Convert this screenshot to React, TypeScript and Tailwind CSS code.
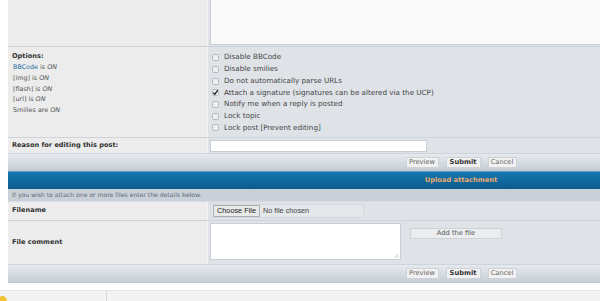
import React from "react";

const font = { fontFamily: '"DejaVu Sans", Verdana, sans-serif' };

function Box({ checked }: { checked?: boolean }) {
  return (
    <span className="relative inline-block w-[7px] h-[7px] border border-[#b3b9bf] bg-[#eceef0] rounded-[1.5px] mr-[5px] shrink-0">
      {checked && (
        <svg viewBox="0 0 8 8" className="absolute left-[-1px] top-[-1px] w-[7px] h-[7px]">
          <path d="M1.5 4.2 L3.2 6 L6.6 1.4" stroke="#222" strokeWidth="1.5" fill="none" />
        </svg>
      )}
    </span>
  );
}

function Btn({ children, bold, w }: { children: React.ReactNode; bold?: boolean; w: string }) {
  return (
    <span
      className={`inline-flex items-center justify-center h-[11px] border border-[#cfd3d7] bg-[#f1f1f1] text-[6.7px] leading-none ${w} ${
        bold ? "font-bold text-[#333]" : "text-[#666]"
      }`}
    >
      {children}
    </span>
  );
}

function Bar({ h }: { h: string }) {
  return (
    <div className={`${h} flex items-center bg-gradient-to-b from-[#e6eaee] to-[#c6ced6] border-b border-[#bfc7cf]`}>
      <div className="w-[908px] flex justify-center gap-[7px]">
        <Btn w="w-[33px]">Preview</Btn>
        <Btn w="w-[35px]" bold>
          Submit
        </Btn>
        <Btn w="w-[29px]">Cancel</Btn>
      </div>
    </div>
  );
}

export default function App() {
  const opts = [
    "Disable BBCode",
    "Disable smilies",
    "Do not automatically parse URLs",
    "Attach a signature (signatures can be altered via the UCP)",
    "Notify me when a reply is posted",
    "Lock topic",
    "Lock post [Prevent editing]",
  ];
  return (
    <div className="w-[600px] h-[301px] overflow-hidden bg-white relative" style={font}>
      <div className="ml-[8px] w-[906px]">
        {/* message row */}
        <div className="flex h-[47px] border-b border-[#cdd4db]">
          <div className="w-[199px] bg-[#ececec]" />
          <div className="flex-1 bg-[#dfe3e8] border-l border-[#f3f4f5] pl-[2px]">
            <div className="h-[45px] bg-[#f9f9f9] border border-[#c8ced4] border-t-0" />
          </div>
        </div>
        {/* options row */}
        <div className="flex h-[91px] border-b border-[#cdd4db]">
          <div className="w-[199px] bg-[#ececec] pl-[4px] pt-[5px]">
            <div className="text-[6.6px] font-bold text-[#333] leading-[9px]">Options:</div>
            <div className="text-[6.4px] text-[#555] leading-[10.8px] pl-[1px] mt-[1px]">
              <div>
                <span className="text-[#1b6aa0]">BBCode</span> is <i>ON</i>
              </div>
              <div>
                [img] is <i>ON</i>
              </div>
              <div>
                [flash] is <i>ON</i>
              </div>
              <div>
                [url] is <i>ON</i>
              </div>
              <div>
                Smilies are <i>ON</i>
              </div>
            </div>
          </div>
          <div className="flex-1 bg-[#dfe3e8] border-l border-[#f3f4f5] pl-[4px] pt-[5px]">
            {opts.map((o, i) => (
              <div key={o} className="flex items-center h-[11.7px] text-[7.2px] text-[#444]">
                <Box checked={i === 3} />
                <span>{o}</span>
              </div>
            ))}
          </div>
        </div>
        {/* reason row */}
        <div className="flex h-[16px] border-b border-[#cdd4db]">
          <div className="w-[199px] bg-[#ececec] pl-[4px] flex items-center text-[6.6px] font-bold text-[#333]">
            Reason for editing this post:
          </div>
          <div className="flex-1 bg-[#dfe3e8] border-l border-[#f3f4f5] pl-[2px] flex items-center">
            <div className="w-[217px] h-[12px] bg-white border border-[#c8ced4]" />
          </div>
        </div>
        <Bar h="h-[17px]" />
        {/* header */}
        <div className="h-[18px] border-t border-[#5d9cc6] bg-gradient-to-b from-[#1677b2] to-[#0a5b8d] flex items-center">
          <div className="w-[908px] text-center text-[6.7px] font-bold text-[#eaa96c]">Upload attachment</div>
        </div>
        {/* desc */}
        <div className="h-[13px] bg-[#c9d0d7] flex items-center pl-[4px] text-[6.1px] text-[#5d6b78] border-b border-[#d6dce1]">
          If you wish to attach one or more files enter the details below.
        </div>
        {/* filename */}
        <div className="flex h-[19px] border-b border-[#cdd4db]">
          <div className="w-[199px] bg-[#ececec] pl-[4px] flex items-center text-[6.6px] font-bold text-[#333]">
            Filename
          </div>
          <div className="flex-1 bg-[#dfe3e8] border-l border-[#f3f4f5] pl-[2px] flex items-center">
            <div
              className="w-[154px] h-[14px] bg-[#e5e8eb] border border-[#d3d8dd] flex items-center pl-[2px] text-[7.3px] text-[#444]"
              style={{ fontFamily: '"Liberation Sans", Arial, sans-serif' }}
            >
              <span className="h-[12px] px-[3px] border border-[#a9aeb3] bg-[#e9e9e9] rounded-[1px] flex items-center text-[#222]">
                Choose File
              </span>
              <span className="ml-[3px]">No file chosen</span>
            </div>
          </div>
        </div>
        {/* file comment */}
        <div className="flex h-[44px] border-b border-[#cdd4db]">
          <div className="w-[199px] bg-[#ececec] pl-[4px] flex items-center text-[6.6px] font-bold text-[#333]">
            File comment
          </div>
          <div className="flex-1 bg-[#dfe3e8] border-l border-[#f3f4f5] pl-[2px] flex items-start pt-[2px]">
            <div className="relative w-[191px] h-[37px] bg-white border border-[#c8ced4]">
              <svg viewBox="0 0 6 6" className="absolute right-[1px] bottom-[1px] w-[5px] h-[5px]">
                <path d="M5.5 1 L1 5.5 M5.5 3.5 L3.5 5.5" stroke="#999" strokeWidth="0.6" />
              </svg>
            </div>
            <div className="ml-[9px] mt-[5px] w-[92px] h-[11px] bg-[#ebedef] border border-[#cfd3d7] flex items-center justify-center text-[6.7px] text-[#555]">
              Add the file
            </div>
          </div>
        </div>
        <Bar h="h-[18px]" />
      </div>
      {/* bottom */}
      <div className="mt-[7px] h-[12px] bg-[#f3f3f3] border-t border-[#e6e6e6] flex">
        <div className="w-[107px] border-r border-[#d8d8d8] relative">
          <span className="absolute left-[-3px] top-[5px] w-[10px] h-[10px] rounded-full bg-[#f2c230]" />
        </div>
      </div>
    </div>
  );
}
